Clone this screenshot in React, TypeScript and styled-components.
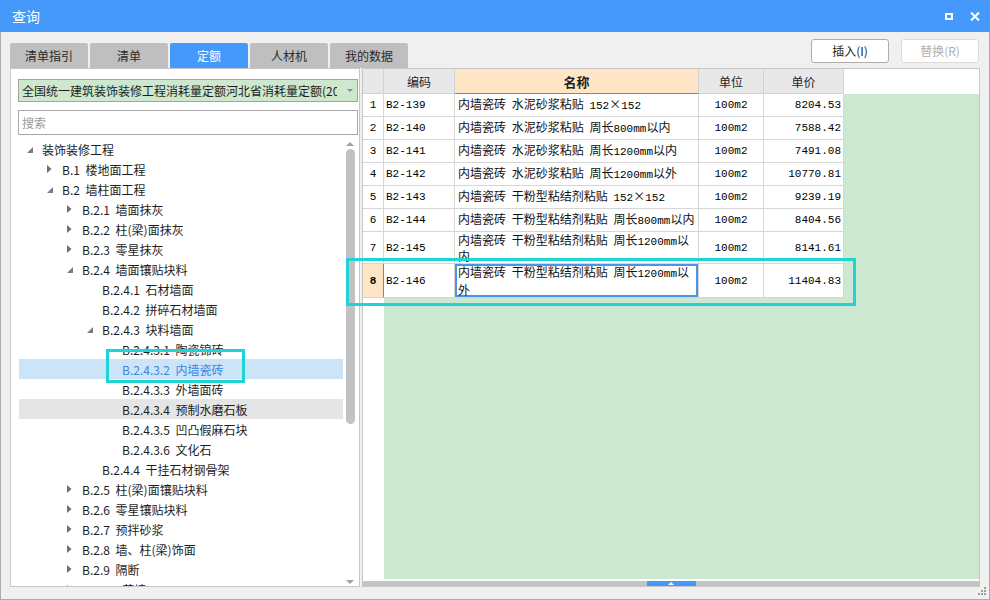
import React from "react";
import styled, { createGlobalStyle } from "styled-components";

const CJK = `"Noto Sans CJK SC", "Noto Sans", sans-serif`;
const MONO = `"Liberation Mono", "Noto Sans CJK SC", monospace`;
const BLUE = "#4499fb";

const GlobalStyle = createGlobalStyle`
  html, body { margin: 0; padding: 0; background: #fff; }
  body { font-family: ${CJK}; color: #1e1e1e; }
  *, *::before, *::after { box-sizing: border-box; }
`;

const Window = styled.div`
  position: relative;
  width: 990px;
  height: 600px;
  display: flex;
  flex-direction: column;
  background: #f0f0f0;
  overflow: hidden;
`;

const TitleBar = styled.div`
  height: 32px;
  flex: none;
  display: flex;
  align-items: center;
  padding: 0 10px 0 12px;
  background: ${BLUE};
  color: #fff;
  font-size: 14px;
`;

const Title = styled.div`
  flex: 1;
`;

const TitleTools = styled.div`
  display: flex;
  align-items: center;
  gap: 17px;
`;

const MaxBox = styled.div`
  width: 8px;
  height: 7px;
  border: 2px solid #fff;
`;

const Body = styled.div`
  flex: 1;
  display: flex;
  flex-direction: column;
  padding: 0 9px;
  border: 1px solid #acacac;
  border-top: none;
`;

const TopRow = styled.div`
  height: 36px;
  flex: none;
  display: flex;
  justify-content: space-between;
`;

const Tabs = styled.div`
  display: flex;
  gap: 2px;
  align-self: flex-end;
`;

const Tab = styled.div<{ $active?: boolean }>`
  width: 78px;
  height: 25px;
  line-height: 25px;
  text-align: center;
  font-size: 12px;
  border-radius: 2px 2px 0 0;
  background: ${(p) => (p.$active ? BLUE : "#bfbfbf")};
  color: ${(p) => (p.$active ? "#fff" : "#2a2a2a")};
`;

const Actions = styled.div`
  display: flex;
  gap: 12px;
  margin-top: 7px;
  margin-right: 1px;
  align-self: flex-start;
`;

const ActionButton = styled.div<{ $disabled?: boolean }>`
  width: 78px;
  height: 24px;
  line-height: 22px;
  text-align: center;
  font-size: 12px;
  background: #fff;
  border-radius: 3px;
  border: 1px solid ${(p) => (p.$disabled ? "#dadada" : "#adadad")};
  color: ${(p) => (p.$disabled ? "#b0b0b0" : "#1e1e1e")};
`;

const Main = styled.div`
  height: 519px;
  flex: none;
  display: flex;
  gap: 2px;
`;

/* ---------- left panel ---------- */

const LeftPanel = styled.div`
  width: 350px;
  display: flex;
  flex-direction: column;
  background: #fff;
  border: 1px solid #c6c6c6;
  padding: 10px 1px 0 7px;
`;

const Select = styled.div`
  height: 23px;
  flex: none;
  display: flex;
  align-items: center;
  background: #cde8cf;
  border: 1px solid #a3a3a3;
  padding-left: 3px;
  font-size: 12px;
`;

const SelectText = styled.div`
  flex: 1;
  overflow: hidden;
  white-space: nowrap;
`;

const SelectArrow = styled.div`
  width: 20px;
  display: flex;
  justify-content: flex-end;
  padding-right: 4px;
  &::after {
    content: "";
    border-left: 3px solid transparent;
    border-right: 3px solid transparent;
    border-top: 3px solid #8a8a8a;
  }
`;

const Search = styled.input`
  height: 25px;
  flex: none;
  margin-top: 8px;
  border: 1px solid #a9a9a9;
  padding: 0 3px;
  font-family: ${CJK};
  font-size: 12px;
  outline: none;
  &::placeholder {
    color: #9a9a9a;
  }
`;

const TreeWrap = styled.div`
  flex: 1;
  display: flex;
  margin: 4px 1px 0 1px;
  overflow: hidden;
`;

const TreeList = styled.div`
  flex: 1;
  overflow: hidden;
`;

const TreeRow = styled.div<{ $level: number; $state?: "selected" | "hover" }>`
  height: 20px;
  display: flex;
  align-items: center;
  padding-left: ${(p) => 8 + p.$level * 20}px;
  font-size: 12px;
  word-spacing: 3px;
  white-space: pre;
  background: ${(p) =>
    p.$state === "selected" ? "#cce4f7" : p.$state === "hover" ? "#e5e5e5" : "transparent"};
  color: ${(p) => (p.$state === "selected" ? "#3d85e0" : "#1e1e1e")};
`;

const Twisty = styled.span`
  width: 15px;
  flex: none;
  display: flex;
  align-items: center;
`;

const VScroll = styled.div`
  width: 14px;
  flex: none;
  display: flex;
  flex-direction: column;
  align-items: center;
  padding: 3px 0 2px;
`;

const ScrollArrow = styled.div<{ $dir: "up" | "down" }>`
  width: 0;
  height: 0;
  border-left: 4px solid transparent;
  border-right: 4px solid transparent;
  ${(p) => (p.$dir === "up" ? "border-bottom: 4px solid #a0a0a0;" : "border-top: 4px solid #a0a0a0;")}
`;

const Thumb = styled.div`
  width: 9px;
  height: 275px;
  margin-top: 3px;
  border-radius: 5px;
  background: #c2c2c2;
`;

const Grow = styled.div`
  flex: 1;
`;

/* ---------- right panel ---------- */

const RightPanel = styled.div`
  width: 618px;
  display: flex;
  flex-direction: column;
  background: #fff;
  border: 1px solid #c6c6c6;
`;

const HeadRow = styled.div`
  height: 25px;
  flex: none;
  display: flex;
`;

const HeadCell = styled.div<{ $w: number; $active?: boolean }>`
  width: ${(p) => p.$w}px;
  flex: none;
  display: flex;
  align-items: center;
  justify-content: center;
  font-size: ${(p) => (p.$active ? 13 : 12)}px;
  font-weight: ${(p) => (p.$active ? 700 : 400)};
  background: ${(p) => (p.$active ? "#fde5c6" : "#e8e8e8")};
  border-right: 1px solid #d2d2d2;
  border-bottom: 1px solid ${(p) => (p.$active ? "#4b93ea" : "#d2d2d2")};
`;

const HeadFill = styled.div`
  flex: 1;
`;

const Grid = styled.div`
  flex: 1;
  background: linear-gradient(to right, #fff 21px, #cde8d0 21px);
`;

const DataRow = styled.div<{ $h: number }>`
  height: ${(p) => p.$h}px;
  display: flex;
`;

const Cell = styled.div<{ $w: number; $align?: string }>`
  width: ${(p) => p.$w}px;
  flex: none;
  display: flex;
  align-items: center;
  justify-content: ${(p) => p.$align || "flex-start"};
  padding: 0 2px;
  background: #fff;
  border-right: 1px solid #d6d6d6;
  border-bottom: 1px solid #d6d6d6;
  font-family: ${MONO};
  font-size: 11px;
  color: #000;
  white-space: nowrap;
`;

const NoCell = styled(Cell)<{ $active?: boolean }>`
  justify-content: center;
  background: ${(p) => (p.$active ? "#fde5c6" : "#fff")};
  font-weight: ${(p) => (p.$active ? 700 : 400)};
  border-right-color: ${(p) => (p.$active ? "#4b93ea" : "#d6d6d6")};
`;

const NameCell = styled.div<{ $lh: number; $editing?: boolean }>`
  width: 244px;
  flex: none;
  display: flex;
  flex-direction: column;
  justify-content: center;
  padding: 0 3px;
  background: #fff;
  border-right: 1px solid #d6d6d6;
  border-bottom: 1px solid #d6d6d6;
  font-size: 12px;
  line-height: ${(p) => p.$lh}px;
  word-spacing: 3px;
  white-space: nowrap;
  color: #111;
  box-shadow: ${(p) => (p.$editing ? "inset 0 0 0 2px #4b93ea" : "none")};
`;

const Latin = styled.span`
  font-family: ${MONO};
  font-size: 11px;
  word-spacing: 0;
  color: #000;
`;

const HScroll = styled.div`
  height: 5px;
  flex: none;
  margin-top: 2px;
  display: flex;
  justify-content: center;
  background: #c4c4c4;
`;

const Collapse = styled.div`
  width: 49px;
  display: flex;
  justify-content: center;
  align-items: center;
  background: ${BLUE};
  &::after {
    content: "";
    border-left: 3px solid transparent;
    border-right: 3px solid transparent;
    border-bottom: 3px solid #fff;
  }
`;

const Footer = styled.div`
  flex: 1;
  display: flex;
  justify-content: flex-end;
  margin-right: -6px;
`;

/* ---------- annotation marks ---------- */

const TreeMark = styled.div`
  position: absolute;
  left: 106px;
  top: 349px;
  width: 139px;
  height: 34px;
  border: 3px solid #1fd4d4;
  pointer-events: none;
`;

const RowMark = styled.div`
  position: absolute;
  left: 346px;
  top: 258px;
  width: 510px;
  height: 48px;
  border: 3px solid #1fd4d4;
  pointer-events: none;
`;

type TreeItem = { level: number; text: string; arrow?: "open" | "closed"; state?: "selected" | "hover" };

const treeItems: TreeItem[] = [
  { level: 0, text: "装饰装修工程", arrow: "open" },
  { level: 1, text: "B.1 楼地面工程", arrow: "closed" },
  { level: 1, text: "B.2 墙柱面工程", arrow: "open" },
  { level: 2, text: "B.2.1 墙面抹灰", arrow: "closed" },
  { level: 2, text: "B.2.2 柱(梁)面抹灰", arrow: "closed" },
  { level: 2, text: "B.2.3 零星抹灰", arrow: "closed" },
  { level: 2, text: "B.2.4 墙面镶贴块料", arrow: "open" },
  { level: 3, text: "B.2.4.1 石材墙面" },
  { level: 3, text: "B.2.4.2 拼碎石材墙面" },
  { level: 3, text: "B.2.4.3 块料墙面", arrow: "open" },
  { level: 4, text: "B.2.4.3.1 陶瓷锦砖" },
  { level: 4, text: "B.2.4.3.2 内墙瓷砖", state: "selected" },
  { level: 4, text: "B.2.4.3.3 外墙面砖" },
  { level: 4, text: "B.2.4.3.4 预制水磨石板", state: "hover" },
  { level: 4, text: "B.2.4.3.5 凹凸假麻石块" },
  { level: 4, text: "B.2.4.3.6 文化石" },
  { level: 3, text: "B.2.4.4 干挂石材钢骨架" },
  { level: 2, text: "B.2.5 柱(梁)面镶贴块料", arrow: "closed" },
  { level: 2, text: "B.2.6 零星镶贴块料", arrow: "closed" },
  { level: 2, text: "B.2.7 预拌砂浆", arrow: "closed" },
  { level: 2, text: "B.2.8 墙、柱(梁)饰面", arrow: "closed" },
  { level: 2, text: "B.2.9 隔断", arrow: "closed" },
  { level: 2, text: "B.2.10 幕墙", arrow: "closed" },
];

type RowItem = {
  no: number;
  code: string;
  name: string[];
  unit: string;
  price: string;
  height: number;
  lh: number;
  active?: boolean;
};

const rows: RowItem[] = [
  { no: 1, code: "B2-139", name: ["内墙瓷砖 水泥砂浆粘贴 152×152"], unit: "100m2", price: "8204.53", height: 23, lh: 14 },
  { no: 2, code: "B2-140", name: ["内墙瓷砖 水泥砂浆粘贴 周长800mm以内"], unit: "100m2", price: "7588.42", height: 23, lh: 14 },
  { no: 3, code: "B2-141", name: ["内墙瓷砖 水泥砂浆粘贴 周长1200mm以内"], unit: "100m2", price: "7491.08", height: 23, lh: 14 },
  { no: 4, code: "B2-142", name: ["内墙瓷砖 水泥砂浆粘贴 周长1200mm以外"], unit: "100m2", price: "10770.81", height: 23, lh: 14 },
  { no: 5, code: "B2-143", name: ["内墙瓷砖 干粉型粘结剂粘贴 152×152"], unit: "100m2", price: "9239.19", height: 23, lh: 14 },
  { no: 6, code: "B2-144", name: ["内墙瓷砖 干粉型粘结剂粘贴 周长800mm以内"], unit: "100m2", price: "8404.56", height: 23, lh: 14 },
  { no: 7, code: "B2-145", name: ["内墙瓷砖 干粉型粘结剂粘贴 周长1200mm以", "内"], unit: "100m2", price: "8141.61", height: 32, lh: 13 },
  { no: 8, code: "B2-146", name: ["内墙瓷砖 干粉型粘结剂粘贴 周长1200mm以", "外"], unit: "100m2", price: "11404.83", height: 34, lh: 16, active: true },
];

const TwistyIcon = ({ kind }: { kind?: "open" | "closed" }) => {
  if (kind === "open")
    return (
      <svg width="7" height="7" viewBox="0 0 7 7" style={{ marginTop: 3 }}>
        <polygon points="6,0 6,6 0,6" fill="#7c7c7c" />
      </svg>
    );
  if (kind === "closed")
    return (
      <svg width="5" height="8" viewBox="0 0 5 8">
        <polygon points="0,0 4.5,4 0,8" fill="#6e6e6e" />
      </svg>
    );
  return null;
};

const NameText = ({ text }: { text: string }) => (
  <span>
    {text.split(/([A-Za-z0-9.\-]+)/).filter(Boolean).map((part, i) =>
      /^[A-Za-z0-9.\-]+$/.test(part) ? <Latin key={i}>{part}</Latin> : <React.Fragment key={i}>{part}</React.Fragment>
    )}
  </span>
);

const App = () => {
  return (
    <Window>
      <GlobalStyle />
      <TitleBar>
        <Title>查询</Title>
        <TitleTools>
          <MaxBox />
          <svg width="10" height="9" viewBox="0 0 10 9">
            <path d="M1 0.5 L9 8.5 M9 0.5 L1 8.5" stroke="#fff" strokeWidth="2" />
          </svg>
        </TitleTools>
      </TitleBar>
      <Body>
        <TopRow>
          <Tabs>
            <Tab>清单指引</Tab>
            <Tab>清单</Tab>
            <Tab $active>定额</Tab>
            <Tab>人材机</Tab>
            <Tab>我的数据</Tab>
          </Tabs>
          <Actions>
            <ActionButton>插入(I)</ActionButton>
            <ActionButton $disabled>替换(R)</ActionButton>
          </Actions>
        </TopRow>
        <Main>
          <LeftPanel>
            <Select>
              <SelectText>全国统一建筑装饰装修工程消耗量定额河北省消耗量定额(2012)</SelectText>
              <SelectArrow />
            </Select>
            <Search readOnly placeholder="搜索" />
            <TreeWrap>
              <TreeList>
                {treeItems.map((item, i) => (
                  <TreeRow key={i} $level={item.level} $state={item.state}>
                    <Twisty>
                      <TwistyIcon kind={item.arrow} />
                    </Twisty>
                    {item.text}
                  </TreeRow>
                ))}
              </TreeList>
              <VScroll>
                <ScrollArrow $dir="up" />
                <Thumb />
                <Grow />
                <ScrollArrow $dir="down" />
              </VScroll>
            </TreeWrap>
          </LeftPanel>
          <RightPanel>
            <HeadRow>
              <HeadCell $w={21} />
              <HeadCell $w={71}>编码</HeadCell>
              <HeadCell $w={244} $active>
                名称
              </HeadCell>
              <HeadCell $w={65}>单位</HeadCell>
              <HeadCell $w={80}>单价</HeadCell>
              <HeadFill />
            </HeadRow>
            <Grid>
              {rows.map((r) => (
                <DataRow key={r.no} $h={r.height}>
                  <NoCell $w={21} $active={r.active}>
                    {r.no}
                  </NoCell>
                  <Cell $w={71}>{r.code}</Cell>
                  <NameCell $lh={r.lh} $editing={r.active}>
                    {r.name.map((line, i) => (
                      <NameText key={i} text={line} />
                    ))}
                  </NameCell>
                  <Cell $w={65} $align="center">
                    {r.unit}
                  </Cell>
                  <Cell $w={80} $align="flex-end">
                    {r.price}
                  </Cell>
                </DataRow>
              ))}
            </Grid>
            <HScroll>
              <Collapse />
            </HScroll>
          </RightPanel>
        </Main>
        <Footer>
          <svg width="8" height="8" viewBox="0 0 8 8">
            <rect x="6" y="0" width="2" height="2" fill="#9d9d9d" />
            <rect x="3" y="3" width="2" height="2" fill="#9d9d9d" />
            <rect x="6" y="3" width="2" height="2" fill="#9d9d9d" />
            <rect x="0" y="6" width="2" height="2" fill="#9d9d9d" />
            <rect x="3" y="6" width="2" height="2" fill="#9d9d9d" />
            <rect x="6" y="6" width="2" height="2" fill="#9d9d9d" />
          </svg>
        </Footer>
      </Body>
      <TreeMark />
      <RowMark />
    </Window>
  );
};

export default App;
